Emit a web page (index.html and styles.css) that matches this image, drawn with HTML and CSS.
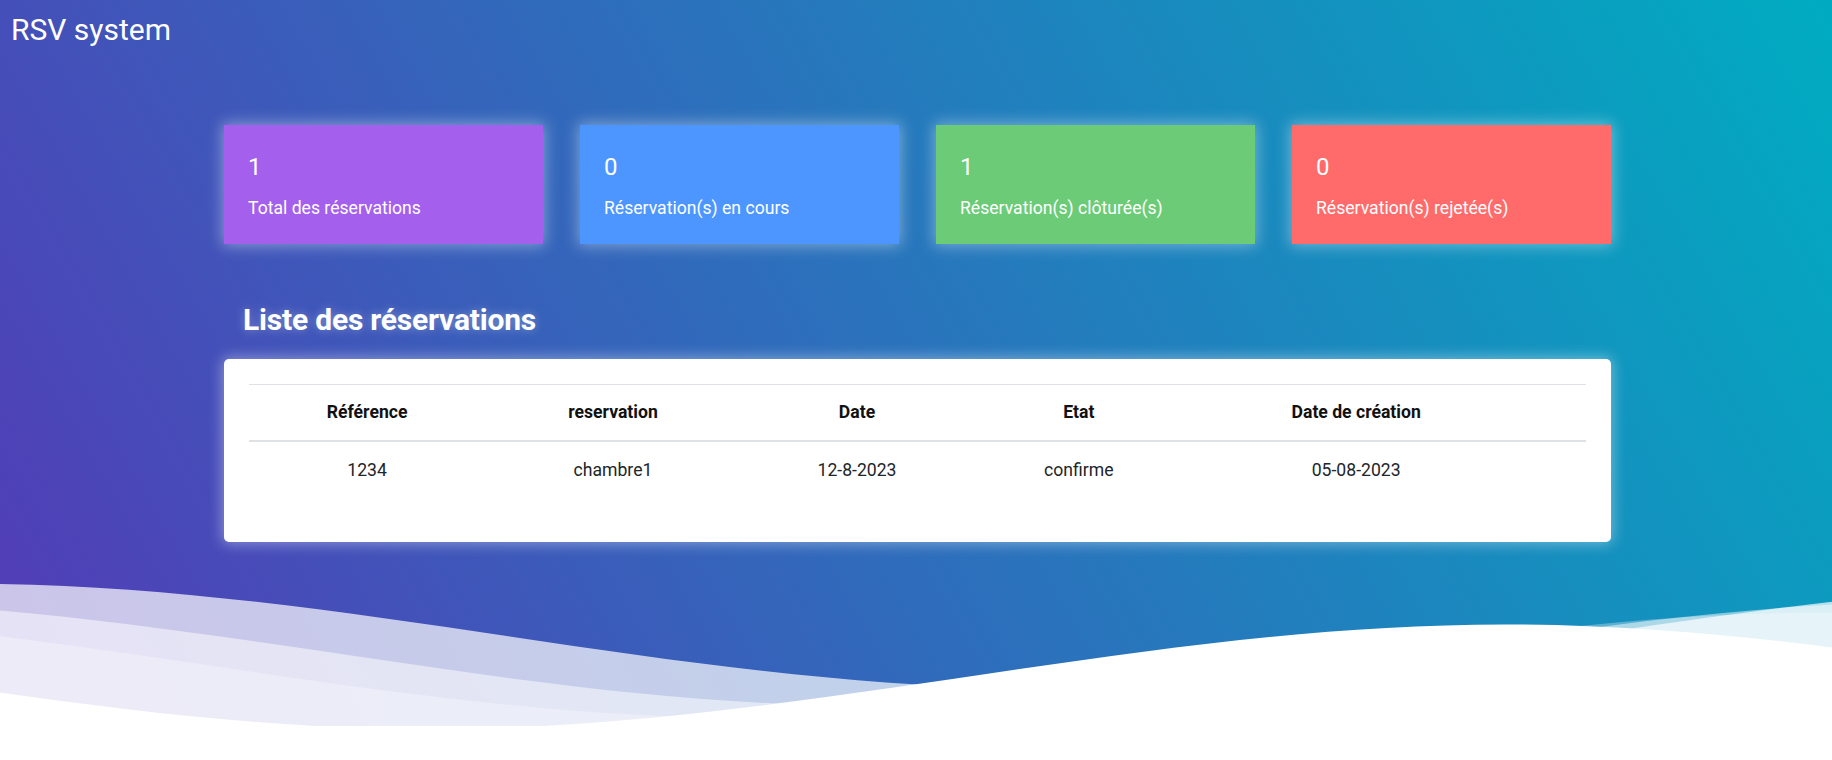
FILE: index.html
```html
<!DOCTYPE html>
<html lang="fr">
<head>
<meta charset="utf-8">
<title>RSV system</title>
<link rel="stylesheet" href="styles.css">
</head>
<body>
<header class="hero">
  <div class="topbar"><span class="brand">RSV system</span></div>
  <main class="container">
    <section class="stats">
      <div class="stat stat-purple"><div class="stat-num">1</div><div class="stat-label">Total des réservations</div></div>
      <div class="stat stat-blue"><div class="stat-num">0</div><div class="stat-label">Réservation(s) en cours</div></div>
      <div class="stat stat-green"><div class="stat-num">1</div><div class="stat-label">Réservation(s) clôturée(s)</div></div>
      <div class="stat stat-red"><div class="stat-num">0</div><div class="stat-label">Réservation(s) rejetée(s)</div></div>
    </section>
    <h2 class="list-title">Liste des réservations</h2>
    <div class="table-card">
      <table class="table">
        <thead>
          <tr><th>Référence</th><th>reservation</th><th>Date</th><th>Etat</th><th>Date de création</th><th></th></tr>
        </thead>
        <tbody>
          <tr><td>1234</td><td>chambre1</td><td>12-8-2023</td><td>confirme</td><td>05-08-2023</td><td></td></tr>
        </tbody>
      </table>
    </div>
  </main>
  <svg class="waves" viewBox="0 24 150 28" preserveAspectRatio="none" aria-hidden="true">
    <defs>
      <path id="gentle-wave" d="M-160 44c30 0 58-18 88-18s 58 18 88 18 58-18 88-18 58 18 88 18 v44h-352z"/>
    </defs>
    <g>
      <use href="#gentle-wave" x="69.5" y="0" fill="rgba(255,255,255,0.7)"/>
      <use href="#gentle-wave" x="55.6" y="3" fill="rgba(255,255,255,0.5)"/>
      <use href="#gentle-wave" x="45" y="5" fill="rgba(255,255,255,0.3)"/>
      <use href="#gentle-wave" x="19.2" y="7" fill="#fff"/>
    </g>
  </svg>
</header>
</body>
</html>
```

FILE: styles.css
```css
* { box-sizing: border-box; }

html, body {
  margin: 0;
  padding: 0;
  background: #fff;
  font-family: Roboto, "Liberation Sans", Arial, sans-serif;
  color: #212529;
}

.hero {
  background: linear-gradient(60deg, rgba(84, 58, 183, 1) 0%, rgba(0, 172, 193, 1) 100%);
  overflow: hidden;
  color: #fff;
}

.topbar {
  padding: 12px 11px 0;
}

.brand {
  display: block;
  font-size: 30px;
  line-height: 35px;
  font-weight: 400;
  color: #fff;
}

.container {
  margin: 78px 221px 0 224px;
}

.stats {
  display: grid;
  grid-template-columns: repeat(4, 1fr);
  gap: 37px;
}

.stat {
  padding: 28px 24px 23px;
  color: #fff;
  box-shadow: 0 0 14px 2px rgba(255, 255, 255, 0.38);
}

.stat-purple { background: #a460ed; }
.stat-blue { background: #4d96ff; }
.stat-green { background: #6bcb77; }
.stat-red { background: #ff6b6b; }

.stat-num {
  font-size: 24px;
  line-height: 29px;
  margin-bottom: 13px;
}

.stat-label {
  font-size: 17.6px;
  line-height: 26.4px;
}

.list-title {
  margin: 58px 0 22px 19px;
  font-size: 30px;
  line-height: 35px;
  font-weight: 700;
  letter-spacing: -0.2px;
  color: #fff;
  text-shadow: 0 0 10px rgba(255, 255, 255, 0.35);
}

.table-card {
  background: #fff;
  border-radius: 5px;
  padding: 25px 25px 25px;
  box-shadow: 0 0 14px 2px rgba(255, 255, 255, 0.38);
}

.table {
  width: 100%;
  border-collapse: collapse;
  margin-bottom: 20px;
  font-size: 17.6px;
  line-height: 26.4px;
  color: #212529;
}

.table th,
.table td {
  padding: 14px 13.2px;
  text-align: center;
  vertical-align: top;
  border-top: 1px solid #dee2e6;
}

.table tbody td {
  padding-top: 15px;
}

.table thead th {
  font-weight: 700;
  color: #111;
  vertical-align: bottom;
  border-bottom: 2px solid #dee2e6;
}

.waves {
  display: block;
  width: 100%;
  height: 163px;
  margin-top: 30px;
  margin-bottom: -9px;
}
```
